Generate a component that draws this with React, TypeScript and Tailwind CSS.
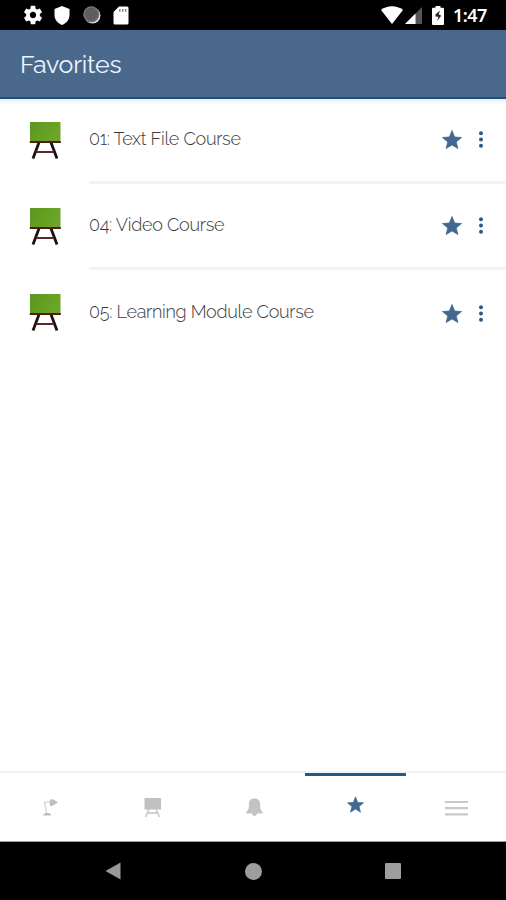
import type { ReactNode } from "react";
import clsx from "clsx";

type Course = {
  title: string;
  rowClass: string;
  boardClass: string;
  titleClass: string;
  actionClass: string;
};

const courses: Course[] = [
  { title: "01: Text File Course", rowClass: "h-[85px]", boardClass: "pt-[23px]", titleClass: "pt-[26px]", actionClass: "pt-[31px]" },
  { title: "04: Video Course", rowClass: "h-[86px]", boardClass: "pt-[24px]", titleClass: "pt-[27px]", actionClass: "pt-[32px]" },
  { title: "05: Learning Module Course", rowClass: "h-[87px]", boardClass: "pt-[24px]", titleClass: "pt-[28px]", actionClass: "pt-[34px]" },
];

function Star({ className }: { className?: string }) {
  return (
    <svg viewBox="0 0 20 19" className={className}>
      <path
        d="M10 0.500l2.600 6.500 6.900.5-5.300 4.400 1.700 6.600L10 14.900l-5.900 3.600 1.700-6.600-5.300-4.400 6.900-.5z"
        fill="#456891"
        stroke="#32608f"
        strokeWidth="0.700"
      />
    </svg>
  );
}

function Board() {
  return (
    <svg viewBox="0 0 32 38" className="h-[38px] w-8">
      <defs>
        <linearGradient id="board" x1="0" y1="0" x2="1" y2="0.4">
          <stop offset="0" stopColor="#5c9424" />
          <stop offset="0.5" stopColor="#639f20" />
          <stop offset="1" stopColor="#6da52a" />
        </linearGradient>
      </defs>
      <path d="M10 20.500L4 36.500M22 20.500l6 16" stroke="#1d1011" strokeWidth="2.800" />
      <path d="M7 30h18" stroke="#5a2a26" strokeWidth="2" />
      <path d="M1 0h30.500v20H1z" fill="url(#board)" />
      <path d="M0.800 20h31" stroke="#4f1f16" strokeWidth="2" />
    </svg>
  );
}

function StatusBar() {
  return (
    <div className="flex h-[30px] items-center bg-black px-[22px] text-white">
      <svg viewBox="0 0 24 24" className="h-[22px] w-[22px] fill-white">
        <path d="M19.430 12.980c.04-.32.070-.64.070-.98s-.03-.66-.07-.98l2.110-1.650c.19-.15.240-.42.120-.64l-2-3.460c-.12-.22-.39-.3-.61-.22l-2.490 1c-.52-.4-1.080-.73-1.690-.98l-.38-2.650C14.460 2.180 14.250 2 14 2h-4c-.25 0-.46.18-.49.42l-.38 2.650c-.61.25-1.170.59-1.690.98l-2.490-1c-.23-.09-.49 0-.61.220l-2 3.460c-.13.22-.07.49.120.640l2.110 1.650c-.04.32-.07.650-.07.980s.03.660.070.980l-2.110 1.650c-.19.15-.24.42-.12.640l2 3.460c.12.220.39.3.61.220l2.490-1c.52.4 1.080.73 1.690.980l.38 2.650c.03.240.24.420.49.420h4c.25 0 .46-.18.49-.42l.38-2.650c.61-.25 1.170-.59 1.690-.98l2.490 1c.23.090.49 0 .61-.22l2-3.460c.12-.22.070-.49-.12-.64l-2.110-1.650zM12 15.500c-1.930 0-3.500-1.570-3.500-3.500s1.570-3.500 3.500-3.500 3.500 1.570 3.500 3.500-1.570 3.500-3.500 3.500z" />
      </svg>
      <svg viewBox="0 0 16 19" className="ml-[10px] h-[19px] w-4 fill-white">
        <path d="M8 0L0.500 3v6c0 4.500 3 8.300 7.500 10 4.500-1.700 7.500-5.500 7.500-10V3z" />
      </svg>
      <svg viewBox="0 0 18 18" className="ml-[13px] h-[18px] w-[18px]">
        <circle cx="9.500" cy="9.500" r="8" fill="#dedede" />
        <circle cx="8.300" cy="8.300" r="8" fill="#5e5e5e" />
        <circle cx="8.300" cy="8.300" r="7.300" fill="none" stroke="#757575" strokeWidth="1.200" />
      </svg>
      <svg viewBox="0 0 16 19" className="ml-[12px] h-[19px] w-4">
        <path d="M6 0.500h8A1.500 1.500 0 0 1 15.500 2v15a1.500 1.500 0 0 1-1.500 1.500H2A1.500 1.500 0 0 1 .5 17V6z" fill="#fff" />
        <path d="M6.800 3v2.800M9.800 3v2.800M12.600 3v2.800" stroke="#777" strokeWidth="1.300" />
      </svg>
      <svg viewBox="0 0 22 18" className="ml-auto h-[18px] w-[22px] fill-white">
        <path d="M0 4C6-1 16-1 22 4L11 18z" />
      </svg>
      <svg viewBox="0 0 17 17" className="ml-[2px] h-[17px] w-[17px]">
        <path d="M17 0v17H0z" fill="#555" />
        <path d="M10.500 6.500V17H0z" fill="#fff" />
      </svg>
      <svg viewBox="0 0 12 19" className="ml-[10px] h-[19px] w-3">
        <path d="M3.500 0h5v1.800H11a1 1 0 0 1 1 1V18a1 1 0 0 1-1 1H1a1 1 0 0 1-1-1V2.800a1 1 0 0 1 1-1h2.500z" fill="#fff" />
        <path d="M8 4.500L3.500 8.500v2l3 .3-1.500 4.200 3.700-4.500V9L6.500 8.500z" fill="#222" />
      </svg>
      <span className="ml-[9px] -mr-[5px] w-[36px] whitespace-nowrap font-['Noto_Sans',sans-serif] text-[18px] font-semibold tracking-[-0.500px]">1:47</span>
    </div>
  );
}

function CourseRow({ course, last }: { course: Course; last: boolean }) {
  return (
    <li className={clsx("flex pl-[29px]", course.rowClass)}>
      <div className={clsx("shrink-0", course.boardClass)}>
        <Board />
      </div>
      <div className={clsx("ml-[28px] flex flex-1", !last && "border-b-[3px] border-[#f3f3f3]")}>
        <h2 className={clsx("flex-1 whitespace-nowrap font-['Raleway','Lato',sans-serif] text-[18px] font-light leading-7 tracking-[-0.270px] text-[#3a3a3a]", course.titleClass)}>
          {course.title}
        </h2>
        <div className={clsx("flex", course.actionClass)}>
          <Star className="h-[19px] w-5" />
          <svg viewBox="0 0 6 18" className="ml-[16px] mr-[22px] mt-px h-[18px] w-[6px] fill-[#2f5985]">
            <circle cx="3" cy="2.300" r="2" />
            <circle cx="3" cy="8.500" r="2" />
            <circle cx="3" cy="14.800" r="2" />
          </svg>
        </div>
      </div>
    </li>
  );
}

function Tab({ active, children }: { active?: boolean; children: ReactNode }) {
  return (
    <button className={clsx("flex flex-1 justify-center border-t-[3px]", active ? "border-[#23588a]" : "border-transparent")}>
      {children}
    </button>
  );
}

export default function App() {
  return (
    <div className="flex h-[900px] w-[506px] flex-col overflow-hidden bg-white">
      <StatusBar />
      <header className="h-[69px] border-b-2 border-[#1d507d] bg-[#4a678c] pl-5 pt-[17px]">
        <h1 className="font-['Raleway','Lato',sans-serif] text-[25px] leading-[34px] tracking-[-0.200px] text-[#edf5ff]">Favorites</h1>
      </header>

      <main className="flex-1 bg-linear-to-b from-[#e9ebef] to-white to-[5px]">
        <ul>
          {courses.map((c, i) => (
            <CourseRow key={c.title} course={c} last={i === courses.length - 1} />
          ))}
        </ul>
      </main>

      <nav className="h-[71px] border-b border-t-2 border-b-[#9b9b9b] border-t-[#f3f3f3]">
        <div className="-mr-[2px] flex h-full">
          <Tab>
            <svg viewBox="0 0 15 17" className="mt-[23px] h-[17px] w-[15px]">
              <path d="M7 2.500L1.500 3.500l2.200 11" fill="none" stroke="#cfcfcf" strokeWidth="1.200" />
              <path d="M6.500 4.500L7 .8l3-.5 5 3-4 2.700-3.500 1.500z" fill="#bfbfbf" />
              <path d="M0.500 16.500v-1.200l2-1.200h3l2.500 1.200v1.200z" fill="#bdbdbd" />
            </svg>
          </Tab>
          <Tab>
            <svg viewBox="0 0 17 20" className="mt-[22px] h-5 w-[17px]">
              <path d="M5 11L1.500 19M12 11l3.500 8M4 15h9" stroke="#cfcfcf" strokeWidth="1.800" />
              <path d="M0.500 0h16.500v11.500H.5z" fill="#c1c1c1" />
            </svg>
          </Tab>
          <Tab>
            <svg viewBox="0 0 17 19" className="ml-px mt-[22px] h-[19px] w-[17px] fill-[#c3c3c3]">
              <path d="M8.500 0.500C12 .5 14 2.500 14 5.500c0 4.500.5 6.500 2.700 8.500v1.500H11c-.4 3.300-4.600 3.300-5 0H.3V14C2.500 12 3 10 3 5.500c0-3 2-5 5.500-5z" />
            </svg>
          </Tab>
          <Tab active>
            <Star className="mt-[20px] h-[17px] w-[17px]" />
          </Tab>
          <Tab>
            <svg viewBox="0 0 23 16" className="mr-px mt-[24px] h-4 w-[23px]">
              <path d="M0 2h23M0 8.200h23M0 14.400h23" stroke="#c9c9c9" strokeWidth="2.200" />
            </svg>
          </Tab>
        </div>
      </nav>

      <footer className="flex h-[58px] items-center bg-black pl-[105px]">
        <svg viewBox="0 0 16 18" className="h-[18px] w-4">
          <path d="M0.500 9L15.500 0.500v17z" fill="#999" />
        </svg>
        <div className="ml-[124px] h-[17px] w-[17px] rounded-full bg-[#9d9d9d]" />
        <div className="ml-[123px] h-4 w-4 rounded-[1px] bg-[#9d9d9d]" />
      </footer>
    </div>
  );
}
